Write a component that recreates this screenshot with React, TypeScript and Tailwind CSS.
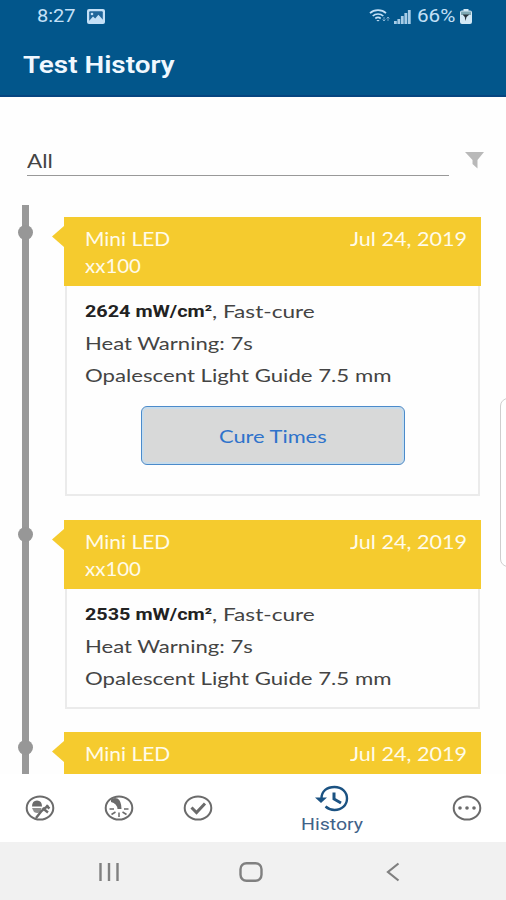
import { useLayoutEffect, useRef, type ReactNode } from "react";

/** A single line of text, widened to fill its box horizontally. */
function Line({ className, children }: { className: string; children: ReactNode }) {
  const box = useRef<HTMLDivElement>(null);
  const text = useRef<HTMLSpanElement>(null);
  useLayoutEffect(() => {
    const b = box.current;
    const t = text.current;
    if (b && t) t.style.transform = `scaleX(${b.clientWidth / t.offsetWidth})`;
  }, []);
  return (
    <div ref={box} className={`shrink-0 whitespace-nowrap text-left ${className}`}>
      <span ref={text} className="inline-block origin-left">{children}</span>
    </div>
  );
}

function StatusBar() {
  return (
    <div className="flex h-8 items-center pl-[37px] pr-[34px] text-[#c4e0f7]">
      <Line className="w-[39px] font-['Roboto',sans-serif] text-[19px] leading-8">8:27</Line>
      <svg className="ml-[11px]" width="18" height="15" viewBox="0 0 18 15">
        <rect width="18" height="15" rx="2" fill="currentColor" />
        <rect x="2.2" y="2.2" width="13.6" height="10" rx="1" fill="#21669a" />
        <path d="M2 12 6 7.5l2.2 2 3.2-3.8 4.6 5V13H2z" fill="currentColor" />
        <circle cx="5" cy="5" r="1.3" fill="currentColor" />
      </svg>
      <div className="grow" />
      <svg width="22" height="16" viewBox="0 0 22 16" fill="none" stroke="currentColor" strokeWidth="1.7">
        <path d="M1 5.2C5.200 1.200 12.800 1.200 17 5.200M3.700 8C6.500 5.300 11.500 5.300 14.300 8M6.300 10.500C8 9 10 9 11.700 10.500" />
        <path d="m7.300 12 1.700 1.600 1.700-1.600z" fill="currentColor" stroke="none" />
        <path d="M15 9v4m-1.500-1.500L15 13l1.500-1.500M19 13V9m-1.500 1.500L19 9l1.500 1.500" strokeWidth="1" opacity=".55" />
      </svg>
      <svg className="ml-[3px]" width="17" height="15" viewBox="0 0 17 15" fill="currentColor">
        <path d="M0 12h2.800v3H0zM3.400 10H6.200v5H3.400zM6.900 7h2.800v8H6.900zM10.400 4H13.200v11h-2.800zM13.900 1h2.800v14H13.900z" opacity=".85" />
      </svg>
      <Line className="ml-[6px] w-[38px] font-['Roboto',sans-serif] text-[19px] leading-8">66%</Line>
      <svg className="ml-[5px]" width="12" height="15" viewBox="0 0 12 15">
        <path d="M3.500 0h5v1.500H10q2 0 2 2V13q0 2-2 2H2q-2 0-2-2V3.500q0-2 2-2h1.500z" fill="#d3e8f5" />
        <path d="M1 2.500h10v3.500H1z" fill="#7fa9b5" />
        <path d="M2.500 5.500h7L6.500 8l-1 4-.7-4z" fill="#26323b" />
      </svg>
    </div>
  );
}

function Entry({ reading, action, cut }: { reading?: string; action?: boolean; cut?: boolean }) {
  return (
    <article className="relative ml-16 w-[417px]">
      <span className="absolute -left-[46.500px] top-[7.500px] size-[15px] rounded-full bg-[#979797]" />
      <svg className="absolute -left-[12px] top-[9px]" width="13" height="21" viewBox="0 0 13 21">
        <path d="M0 10.500 12 0h1v21h-1z" fill="#f5cb2e" />
      </svg>
      <header className={`flex justify-between bg-[#f5cb2e] pl-[21px] pr-[14px] pt-2 font-['Lato',sans-serif] text-[19px] leading-[27px] text-[#fffbe9] ${cut ? "h-[42px]" : "h-[69px]"}`}>
        <div>
          <Line className="w-[85px]">Mini LED</Line>
          {!cut && <Line className="w-[56px]">xx100</Line>}
        </div>
        <Line className="w-[117px]">Jul 24, 2019</Line>
      </header>
      {reading && (
        <div className={`mx-px border-2 border-t-0 border-[#ebebeb] pl-[18px] pt-[9px] font-['Lato',sans-serif] text-[18px] leading-8 text-[#444] ${action ? "h-[210px]" : "h-[120px]"}`}>
          <div className="flex">
            <Line className="w-[127px] font-['Roboto',sans-serif] text-[17px] font-bold text-[#222]">{reading}</Line>
            <Line className="w-[103px]">,&nbsp;Fast-cure</Line>
          </div>
          <Line className="w-[168px]">Heat Warning: 7s</Line>
          <Line className="w-[307px]">Opalescent Light Guide 7.5 mm</Line>
          {action && (
            <button className="ml-[56px] mt-[15px] flex h-[59px] w-[264px] items-center justify-center rounded-md border-[1.500px] border-[#4b8bcb] bg-[#d8d9d9] text-[#2f73cb] shadow-[inset_0_0_0_2px_#c8dceb]">
              <Line className="w-[108px]">Cure Times</Line>
            </button>
          )}
        </div>
      )}
    </article>
  );
}

function TabBar() {
  return (
    <nav className="flex h-[68px] items-center bg-white pl-[25px] pr-6 text-[#6b6b6b]">
      <svg width="30" height="26" viewBox="0 0 30 26" fill="none" stroke="currentColor" strokeWidth="2">
        <ellipse cx="15" cy="13" rx="13.300" ry="11.500" />
        <path d="M7 11.500q0-6 5-6t5 6z" fill="currentColor" stroke="none" />
        <path d="M7 13h9.500l-1 4q-3 2-6.500 0z" fill="currentColor" stroke="none" opacity=".75" />
        <path d="m11 23 5.500-7 3-2.500 4-3M17.500 13l5.500 4.500M21 10.500l3.500 3" strokeWidth="2.400" />
      </svg>
      <svg className="ml-[49px]" width="30" height="26" viewBox="0 0 30 26" fill="none" stroke="currentColor">
        <ellipse cx="15" cy="13" rx="13.300" ry="11.500" strokeWidth="2" />
        <path d="M7 4.500Q10 2 13.500 3.500 17.500 6 17.500 14h-4Q13 8.500 7 7z" fill="currentColor" stroke="none" />
        <path d="M5.500 14H10M20 14h4.500M7.500 19.500 11.500 17M15 17.500V22M18.500 17l4 2.500" strokeWidth="1.500" />
      </svg>
      <svg className="ml-[49px]" width="30" height="26" viewBox="0 0 30 26" fill="none" stroke="currentColor" strokeWidth="2">
        <ellipse cx="15" cy="13" rx="13.300" ry="11.500" />
        <path d="m8.500 12.500 5 5L22 8.500" strokeWidth="3" />
      </svg>
      <div className="ml-[87px] mt-[4px] flex w-[63px] flex-col items-center text-[#1b5282]">
        <svg width="34" height="27" viewBox="0 0 34 27" fill="none" stroke="currentColor" strokeWidth="2.400">
          <path d="M6.500 13.500C6.500 6 12 2 19.500 2 27 2 32 7 32 13.500S27 25 19.500 25q-5 0-9-3.500" />
          <path d="M0 12.500h12L6 18z" fill="currentColor" stroke="none" />
          <path d="M19 7.500V14l7 4" strokeWidth="3" />
        </svg>
        <Line className="w-[62px] font-['Roboto',sans-serif] text-[17px] leading-6 text-[#3f6289]">History</Line>
      </div>
      <div className="grow" />
      <svg width="30" height="26" viewBox="0 0 30 26" fill="none" stroke="currentColor" strokeWidth="2">
        <ellipse cx="15" cy="13" rx="13.300" ry="11.500" />
        <g fill="currentColor" stroke="none">
          <circle cx="8" cy="13" r="1.800" />
          <circle cx="15" cy="13" r="1.800" />
          <circle cx="22" cy="13" r="1.800" />
        </g>
      </svg>
    </nav>
  );
}

export default function App() {
  return (
    <div className="relative flex h-[900px] w-[506px] flex-col overflow-hidden bg-[#fefefe]">
      <header className="h-[97px] shrink-0 border-b-2 border-[#064580] bg-[#02568b]">
        <StatusBar />
        <Line className="ml-[23px] mt-[17px] w-[152px] font-['Roboto',sans-serif] text-[24px] font-semibold leading-8 text-[#f0f8ff]">Test History</Line>
      </header>
      <div className="flex h-[108px] shrink-0 items-start pl-[27px] pt-[49px]">
        <div className="h-[30px] w-[422px] border-b-[1.500px] border-[#999] font-['Lato',sans-serif] text-[19px] leading-[29px] text-[#444]">
          <Line className="w-[26px]">All</Line>
        </div>
        <svg className="ml-4 mt-[6px]" width="20" height="17" viewBox="0 0 20 17">
          <path d="M0 0h19L12.500 8v8.500L7.500 12V8z" fill="#b9b9b9" />
        </svg>
      </div>
      <main className="relative flex h-[569px] shrink-0 flex-col gap-[23.500px] pt-3">
        <span className="absolute left-[21.500px] top-0 h-full w-[7px] bg-[#999]" />
        <Entry reading="2624 mW/cm²" action />
        <Entry reading="2535 mW/cm²" />
        <Entry cut />
      </main>
      <TabBar />
      <footer className="flex grow items-center bg-[#f1f1f1] pl-[98px] pt-px text-[#808080]">
        <svg width="22" height="20" viewBox="0 0 22 20" fill="none" stroke="currentColor" strokeWidth="2.400">
          <path d="M2.500 1v18M11 1v18M19.500 1v18" />
        </svg>
        <svg className="ml-[119px]" width="24" height="20" viewBox="0 0 24 20" fill="none" stroke="currentColor" strokeWidth="2.400">
          <rect x="1.500" y="1.200" width="21" height="17.600" rx="6" />
        </svg>
        <svg className="ml-[123px]" width="14" height="20" viewBox="0 0 14 20" fill="none" stroke="currentColor" strokeWidth="2.200">
          <path d="M12.500 1.500 2 10l10.500 8.500" />
        </svg>
      </footer>
      <span className="absolute left-[500px] top-[398px] h-[169px] w-5 rounded-lg border-[1.500px] border-[#cfcfcf] bg-white" />
    </div>
  );
}
